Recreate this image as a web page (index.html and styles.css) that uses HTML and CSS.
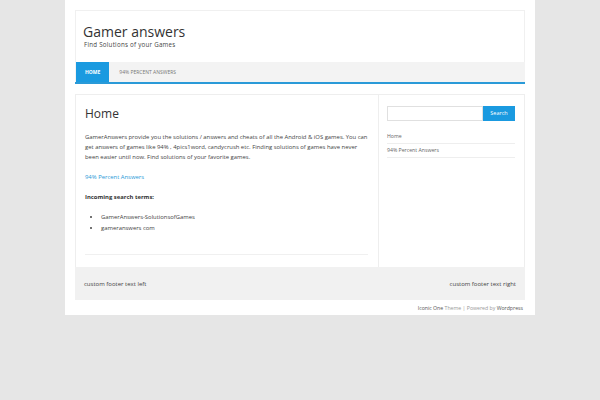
FILE: index.html
```html
<!DOCTYPE html>
<html>
<head>
<meta charset="utf-8">
<link rel="stylesheet" href="styles.css">
</head>
<body>
<div class="wrapper">
  <header class="site-header">
    <h1 class="site-title">Gamer answers</h1>
    <p class="site-desc">Find Solutions of your Games</p>
  </header>
  <nav class="main-nav">
    <a class="nav-item active">HOME</a>
    <a class="nav-item">94% PERCENT ANSWERS</a>
  </nav>
  <div class="main">
    <div class="content">
      <h2 class="entry-title">Home</h2>
      <p class="para">GamerAnswers provide you the solutions / answers and cheats of all the Android &amp; iOS games. You can get answers of games like 94% , 4pics1word, candycrush etc. Finding solutions of games have never been easier until now. Find solutions of your favorite games.</p>
      <p class="para"><a class="link">94% Percent Answers</a></p>
      <p class="para bold">Incoming search terms:</p>
      <ul class="terms">
        <li>GamerAnswers-SolutionsofGames</li>
        <li>gameranswers com</li>
      </ul>
      <div class="entry-end"></div>
    </div>
    <aside class="sidebar">
      <div class="search">
        <div class="search-input"></div>
        <div class="search-btn">Search</div>
      </div>
      <ul class="side-links">
        <li>Home</li>
        <li>94% Percent Answers</li>
      </ul>
    </aside>
  </div>
  <footer class="site-footer">
    <span>custom footer text left</span>
    <span>custom footer text right</span>
  </footer>
  <div class="site-info"><span class="dark">Iconic One</span> Theme | Powered by <span class="dark">Wordpress</span></div>
</div>
</body>
</html>
```
FILE: styles.css
```css
html, body {
  margin: 0;
  padding: 0;
}
body {
  background: #e6e6e6;
  font-family: "Open Sans", "Noto Sans", sans-serif;
  color: #444;
}
.wrapper {
  width: 450px;
  margin: 0 auto;
  background: #fff;
  padding: 10px 10px 0;
}
.site-header {
  border: 1px solid #f0f0f0;
  border-bottom: none;
  padding-left: 7px;
  box-sizing: border-box;
  height: 52px;
  padding-top: 12px;
}
.site-title {
  margin: 0;
  font-weight: normal;
  font-size: 14px;
  line-height: 18px;
  color: #333;
}
.site-desc {
  margin: 0 0 0 1px;
  font-size: 6.2px;
  line-height: 7px;
  letter-spacing: 0.25px;
  color: #444;
}
.main-nav {
  display: flex;
  height: 20px;
  background: #f3f3f3;
  border-bottom: 2px solid #2a9ad8;
  padding-left: 1px;
}
.nav-item {
  font-size: 5px;
  line-height: 20px;
  color: #777;
  padding: 0 10px;
}
.nav-item.active {
  background: #1a9ae0;
  color: #fff;
  font-weight: bold;
  padding: 0 9px;
}
.main {
  display: flex;
  margin-top: 10px;
  border: 1px solid #eeeeee;
  border-bottom: none;
  height: 173px;
  box-sizing: border-box;
}
.content {
  width: 303px;
  box-sizing: border-box;
  border-right: 1px solid #eee;
  padding: 11px 10px 0 9px;
}
.entry-title {
  margin: 0;
  font-weight: normal;
  font-size: 12px;
  line-height: 16px;
  color: #333;
}
.para {
  margin: 10px 0 0;
  font-size: 5.9px;
  line-height: 10px;
  color: #444;
}
.bold {
  font-weight: bold;
  color: #333;
}
.link {
  color: #2a9ad8;
}
.terms {
  margin: 10px 0 0;
  padding-left: 16px;
  font-size: 5.9px;
  line-height: 11px;
}
.entry-end {
  margin-top: 20px;
  border-top: 1px solid #f0f0f0;
}
.sidebar {
  flex: 1;
  padding: 11px 9px 0 8px;
}
.search {
  display: flex;
  height: 15px;
}
.search-input {
  flex: 1;
  border: 1px solid #e0e0e0;
  box-sizing: border-box;
}
.search-btn {
  width: 32px;
  background: #1a9ae0;
  color: #fff;
  font-size: 5.5px;
  line-height: 15px;
  text-align: center;
}
.side-links {
  list-style: none;
  margin: 9px 0 0;
  padding: 0;
  font-size: 5.2px;
  color: #666;
}
.side-links li {
  line-height: 13px;
  border-bottom: 1px solid #eee;
}
.site-footer {
  display: flex;
  justify-content: space-between;
  height: 33px;
  background: #f1f1f1;
  font-size: 6px;
  line-height: 34px;
  padding: 0 9px;
  color: #444;
}
.site-info {
  height: 15px;
  text-align: right;
  font-size: 5.2px;
  line-height: 16px;
  color: #999;
  padding-right: 2px;
}
.dark {
  color: #555;
}
```
